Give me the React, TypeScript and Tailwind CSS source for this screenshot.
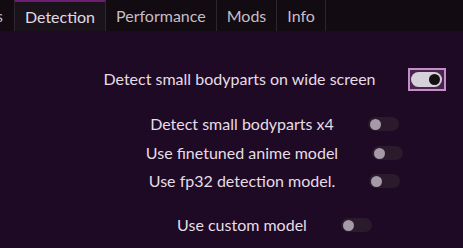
import React from "react";

const font = { fontFamily: '"Lato", "Noto Sans", sans-serif' };

function SmallToggle() {
  return (
    <div className="w-[31px] h-[14px] rounded-full bg-[#2a1a2c] flex items-center pl-[2px] shrink-0">
      <div className="w-[11px] h-[11px] rounded-full bg-[#a69aa8]" />
    </div>
  );
}

function BigToggle() {
  return (
    <div className="w-[38px] h-[23px] border-2 border-[#c58ec6] bg-[#4a2450] flex items-center justify-center shrink-0">
      <div className="w-[31px] h-[15px] rounded-full bg-[#d6d0d8] flex items-center justify-end pr-[2px]">
        <div className="w-[11px] h-[11px] rounded-full bg-[#141014]" />
      </div>
    </div>
  );
}

function Row({ label, big, className }: { label: string; big?: boolean; className?: string }) {
  return (
    <div className={"flex h-[28px] items-center justify-center " + (className ?? "")}>
      <span className="text-[16px] text-[#e6dde6] leading-none">{label}</span>
      {big ? (
        <div className="ml-[32px]">
          <BigToggle />
        </div>
      ) : (
        <div className="ml-[34px]">
          <SmallToggle />
        </div>
      )}
    </div>
  );
}

export default function App() {
  const tabs = ["Detection", "Performance", "Mods", "Info"];
  return (
    <div className="w-[463px] h-[248px] bg-[#1e0a24] overflow-hidden" style={font}>
      <div className="flex h-[31px] bg-[#120b12] overflow-hidden">
        <div className="ml-[-4px] pr-[11px] flex items-center text-[16px] text-[#c6bec6] border-r border-[#2e262e]">
          s
        </div>
        {tabs.map((t, i) => (
          <div
            key={t}
            className={
              "px-[10px] flex items-center text-[16px] border-r border-[#2e262e] " +
              (i === 0
                ? "bg-[#1b131b] text-[#e2dae2] border-t-2 border-t-[#6b1e72]"
                : "text-[#c6bec6]")
            }
          >
            {t}
          </div>
        ))}
      </div>
      <div className="pl-[86px] flex flex-col">
        <Row label="Detect small bodyparts on wide screen" big className="mt-[34px]" />
        <Row label="Detect small bodyparts x4" className="mt-[17px]" />
        <Row label="Use finetuned anime model" className="mt-[1px]" />
        <Row label="Use fp32 detection model." />
        <Row label="Use custom model" className="mt-[16px]" />
      </div>
    </div>
  );
}
